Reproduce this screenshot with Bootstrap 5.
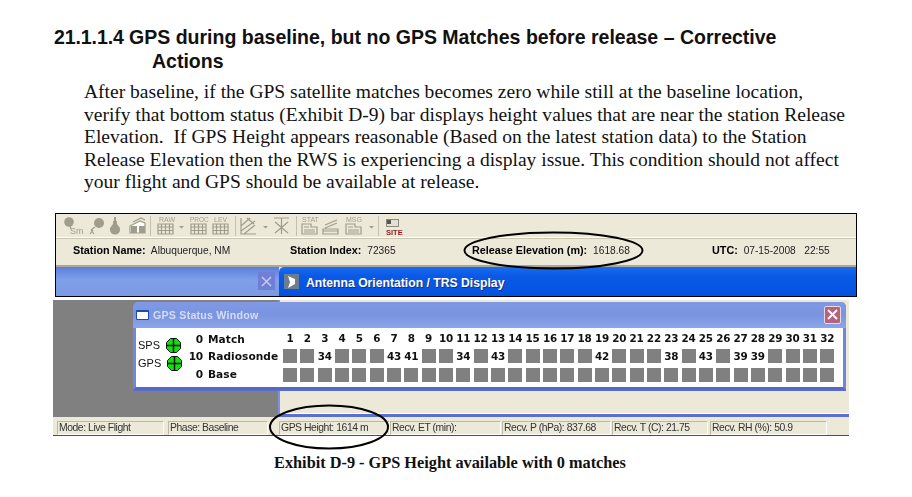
<!DOCTYPE html>
<html lang="en"><head><meta charset="utf-8"><title>Exhibit D-9</title>
<link rel="stylesheet" href="https://cdn.jsdelivr.net/npm/bootstrap@5.3.0/dist/css/bootstrap.min.css">
<style>
html,body{background:#fff;margin:0;height:497px;overflow:hidden}
.doc-page{width:912px;position:relative;height:497px}
.sec-head{font:bold 19.52px/23.5px "Liberation Sans",Arial,sans-serif;color:#111;padding:26px 130px 0 54px;display:flex}
.sec-num{width:75px;flex:none;letter-spacing:-.1px}
.sec-title{margin:0;font:inherit}
.sec-title span{display:block;padding-left:23px}
.sec-body{font:19.55px/22.6px "Liberation Serif","Times New Roman",serif;color:#111;margin:8px 0 0 84px;width:790px;white-space:nowrap}
.shot-top{margin:19px 0 0 55px;width:802px;height:84px;border:1px solid #000;border-right-width:1.5px;background:#ece9d8;display:flex;flex-direction:column}
.tool-row{height:24px;background:#ece9d8;border-bottom:1px solid #fff;box-shadow:0 1px 0 #c9c5b2;flex:none;filter:blur(.3px)}
.tool-row svg,.tab-off svg{display:block}
.info-row{height:28px;margin-top:1px;flex:none;border-bottom:2px solid #aca899;font:10.2px/22px "Liberation Sans",sans-serif;display:flex;color:#222;filter:blur(.25px)}
.info-row b{color:#000;margin-right:3px;font:bold 10.8px/22px "Liberation Sans",sans-serif}
.i1{width:234px;padding-left:17px}.i2{width:182px}.i3{width:240px}
.tab-row{flex:1;display:flex;min-height:0}
.tab-off{width:223px;background:linear-gradient(#5c7fdc,#7f9fe8 45%,#7b9ae4);display:flex;justify-content:flex-end;align-items:center;padding-right:4px}
.tab-x{width:17px;height:18px;background:#6f7fd6;display:flex;align-items:center;justify-content:center}
.tab-on{flex:1;background:linear-gradient(#1a6cf0,#0a5ae6 30%,#0552e0);border-radius:5px 0 0 0;color:#fff;font:bold 12.2px/30px "Liberation Sans",sans-serif;display:flex;align-items:center;gap:7px;padding:4px 0 0 5px;text-shadow:1px 1px 0 #1a2f7a}
.tab-ico{width:15px;height:15px;background:#6d7d90;display:block;flex:none;margin-top:-3px}
.shot-bottom{margin:3px 0 0 53px;width:796px;filter:blur(.25px)}
.work-area{height:117px;display:flex;position:relative}
.work-left{width:225px;background:#808080}
.work-right{flex:1;background:#ece9d8;border-left:2px solid #7d90dc;border-bottom:3px solid #5a6fd0;box-shadow:inset 0 -1px 0 #fff}
.gps-win{position:absolute;left:80px;top:2px;width:713px;height:88px;background:#fff;border:3px solid #7286d9;border-top:0;border-radius:5px 5px 0 0;border-bottom-color:#5468c4;box-shadow:0 1px 0 #5a6fd0}
.gps-title{height:26px;margin:0 -3px;background:linear-gradient(#8099e4,#7b94e0 50%,#8ca6ea);border-radius:5px 5px 0 0;display:flex;align-items:center;padding:1px 5px 0 3px;color:#d4dcf6;font:bold 10.7px "Liberation Sans",sans-serif;letter-spacing:.2px;gap:4px}
.gps-title i{width:13px;height:10px;background:#fff;border:1.5px solid #1c4bb0;border-top-width:2.5px;border-radius:1px;display:block}
.gps-close{margin-left:auto;margin-top:-1px;width:17px;height:18px;background:#b5647e;border:1px solid #e8d8e0;border-radius:2px;display:flex;align-items:center;justify-content:center}
.gps-body{display:flex;height:59px}
.gps-leds{width:49px;padding:9px 0 0 2px;font:11px/17.6px "Liberation Sans",sans-serif;color:#111}
.gps-leds div{display:flex;align-items:center;gap:6px;height:17.6px}
.gps-labels{width:98px;font:bold 10.6px/17.5px "DejaVu Sans",sans-serif;letter-spacing:.05px;padding-top:3px;color:#111}
.gps-labels div{display:flex;gap:5px}
.gps-labels u{text-decoration:none;width:18px;text-align:right;flex:none;letter-spacing:-.2px}
.sat-grid{display:grid;grid-template-columns:repeat(32,14px);column-gap:3.33px;row-gap:4.5px;grid-template-rows:15px 14px 14px;margin:2px 0 0 0;font:bold 10.4px/15px "DejaVu Sans",sans-serif;color:#111;text-align:center;letter-spacing:-.2px}
.sat-grid span{white-space:nowrap;display:flex;justify-content:center;align-items:center}
.sat-grid .sat-h{padding-top:3px}
.sat-grid .sq{background:#808080}
.status-bar{height:19px;background:#ece9d8;border-bottom:1.5px solid #1f50c4;display:flex;font:10.4px/12px "Liberation Sans",sans-serif;color:#333;letter-spacing:-.45px;padding:4px 0 0 4px}
.status-bar div{border:1px solid #bcb8a6;border-right-color:#fff;border-bottom-color:#fff;height:14px;padding:0 1px;flex:none;white-space:nowrap;overflow:hidden}
.exhibit{font:bold 16.3px/18px "Liberation Serif","Times New Roman",serif;text-align:center;width:900px;margin:18px 0 0;color:#111}
.ovals{position:absolute;left:0;top:0;pointer-events:none}
</style></head>
<body>
<div class="doc-page">
  <div class="sec-head"><span class="sec-num">21.1.1.4</span>
    <h1 class="sec-title">GPS during baseline, but no GPS Matches before release – Corrective<span>Actions</span></h1></div>
  <p class="sec-body">After baseline, if the GPS satellite matches becomes zero while still at the baseline location,<br>verify that bottom status (Exhibit D-9) bar displays height values that are near the station Release<br>Elevation.&nbsp; If GPS Height appears reasonable (Based on the latest station data) to the Station<br>Release Elevation then the RWS is experiencing a display issue. This condition should not affect<br>your flight and GPS should be available at release.</p>

  <div class="shot-top">
    <div class="tool-row">
      <svg width="800" height="24" viewBox="55 214 800 24" fill="none" stroke="#a09d8c" stroke-width="1.2" font-family="Liberation Sans,sans-serif" font-size="7">
        <circle cx="68" cy="222" r="4.8" fill="#a09d8c" stroke="none"/><path d="M69 226l1 3"/><text x="69" y="234" fill="#a09d8c" stroke="none" font-size="9">Sm</text>
        <circle cx="98" cy="223" r="5" fill="#a09d8c" stroke="none"/><path d="M94 227l-4 3m0 0l3 4m-4 0l3-4"/>
        <path d="M112 221h4v3l3 4v2a5 4.500 0 0 1-10 0v-2l3-4z" fill="#a09d8c" stroke="none"/><path d="M114 217v4" stroke-width="2"/>
        <path d="M129 226l10-5 5 2v10h-15z" fill="#fff"/><path d="M130 226h6v7h-6zM138 226h6v7h-6z" fill="#a09d8c" stroke="none"/><path d="M132 222l8-4 4 2"/>
        <path d="M149.500 216v20M234.500 216v20M295.500 216v20M377.500 216v20" stroke="#c4c0ad" stroke-width="1"/>
        <g fill="#a09d8c" stroke="none"><text x="158" y="222">RAW</text><text x="189" y="222" font-size="6.500">PROC</text><text x="213" y="222">LEV</text></g>
        <path d="M157 224h15v10h-15zM157 227h15M157 230.500h15M160.500 224v10M164.500 224v10M168.500 224v10"/>
        <path d="M190 224h15v10h-15zM190 227h15M190 230.500h15M193.500 224v10M197.500 224v10M201.500 224v10"/>
        <path d="M212 224h15v10h-15zM212 227h15M212 230.500h15M215.500 224v10M219.500 224v10M223.500 224v10"/>
        <path d="M178 226h5l-2.500 2.500z M262 226h5l-2.500 2.500z M368 226h5l-2.500 2.500z" fill="#a09d8c" stroke="none"/>
        <path d="M240 218v16h15M240 231l14-10M243 234l11-9M240 226l9-8M246 218l7 6"/>
        <path d="M273 218h15M280.500 218v16M274 233l13-11M274 222l13 11"/>
        <g fill="#a09d8c" stroke="none"><text x="301" y="222">STAT</text><text x="345" y="222">MSG</text></g>
        <path d="M301 224v10h15v-7h-6v-3zM303 227h5M303 230h11M303 232h11"/>
        <path d="M322 234h15v-5h-15zM324 225l12-5M324 228l12-5M322 231h15"/>
        <path d="M345 224v10h15v-7h-6v-3zM347 227h5M347 230h11M347 232h11"/>
        <rect x="385.500" y="219.500" width="12" height="7" fill="#e4e1d2" stroke="#8a8a80" stroke-width="1"/><rect x="386" y="220" width="4" height="4" fill="#555" stroke="none"/>
        <text x="385" y="235" fill="#8a1a1a" stroke="none" font-weight="700" font-size="7.500">SITE</text>
      </svg>
    </div>
    <div class="info-row">
      <div class="i1"><b>Station Name:</b> Albuquerque, NM</div>
      <div class="i2"><b>Station Index:</b> 72365</div>
      <div class="i3"><b>Release Elevation (m):</b> 1618.68</div>
      <div><b>UTC:</b> 07-15-2008 &nbsp;&nbsp;22:55</div>
    </div>
    <div class="tab-row">
      <div class="tab-off"><span class="tab-x"><svg width="11" height="11" viewBox="0 0 11 11" stroke="#c6cbef" stroke-width="1.5"><path d="M1 1l9 9M10 1l-9 9"/></svg></span></div>
      <div class="tab-on"><svg class="tab-ico" viewBox="0 0 15 15"><path d="M4 2l7 3v5l-7 4 2-6z" fill="#fff"/></svg>Antenna Orientation / TRS Display</div>
    </div>
  </div>

  <div class="shot-bottom">
    <div class="work-area">
      <div class="work-left"></div><div class="work-right"></div>
      <div class="gps-win">
        <div class="gps-title"><i></i>GPS Status Window
          <span class="gps-close"><svg width="11" height="11" viewBox="0 0 11 11" stroke="#fff" stroke-width="1.8"><path d="M1 1l9 9M10 1l-9 9"/></svg></span></div>
        <div class="gps-body">
          <div class="gps-leds">
            <div>SPS <svg width="15" height="15" viewBox="0 0 15 15"><path d="M4.500 .5h6l4 4v6l-4 4h-6l-4-4v-6z" fill="#10e010" stroke="#111"/><path d="M7.500 .5v14M.5 7.500h14" stroke="#111" stroke-width="1.500"/></svg></div>
            <div>GPS <svg width="15" height="15" viewBox="0 0 15 15"><path d="M4.500 .5h6l4 4v6l-4 4h-6l-4-4v-6z" fill="#10e010" stroke="#111"/><path d="M7.500 .5v14M.5 7.500h14" stroke="#111" stroke-width="1.500"/></svg></div>
          </div>
          <div class="gps-labels">
            <div><u>0</u>Match</div><div><u>10</u>Radiosonde</div><div><u>0</u>Base</div>
          </div>
          <div class="sat-grid" id="sats"></div>
        </div>
      </div>
    </div>
    <div class="status-bar">
      <div style="width:107px">Mode: Live Flight</div>
      <div style="width:100px;margin-left:4px">Phase: Baseline</div>
      <div style="width:111px;margin-left:11px">GPS Height: 1614 m</div>
      <div style="width:111px">Recv. ET (min):</div>
      <div style="width:109px;margin-left:1px">Recv. P (hPa): 837.68</div>
      <div style="width:96px;margin-left:1px">Recv. T (C): 21.75</div>
      <div style="width:117px;margin-left:2px">Recv. RH (%): 50.9</div>
    </div>
  </div>
  <div class="exhibit">Exhibit D-9 - GPS Height available with 0 matches</div>
  <svg class="ovals" width="912" height="497" fill="none" stroke="#000" stroke-width="2"><ellipse cx="553.500" cy="250.500" rx="89" ry="18"/><ellipse cx="329" cy="427" rx="59" ry="21.500"/></svg>
</div>
<script>
const vals={3:34,7:43,8:41,11:34,13:43,19:42,23:38,25:43,27:39,28:39};
let h='';
for(let i=1;i<=32;i++)h+=`<span class="sat-h">${i}</span>`;
for(let i=1;i<=32;i++)h+=vals[i]?`<span>${vals[i]}</span>`:'<span class="sq"></span>';
for(let i=1;i<=32;i++)h+='<span class="sq"></span>';
document.getElementById('sats').innerHTML=h;
</script>
<script src="https://cdn.jsdelivr.net/npm/bootstrap@5.3.0/dist/js/bootstrap.bundle.min.js"></script>
</body></html>
